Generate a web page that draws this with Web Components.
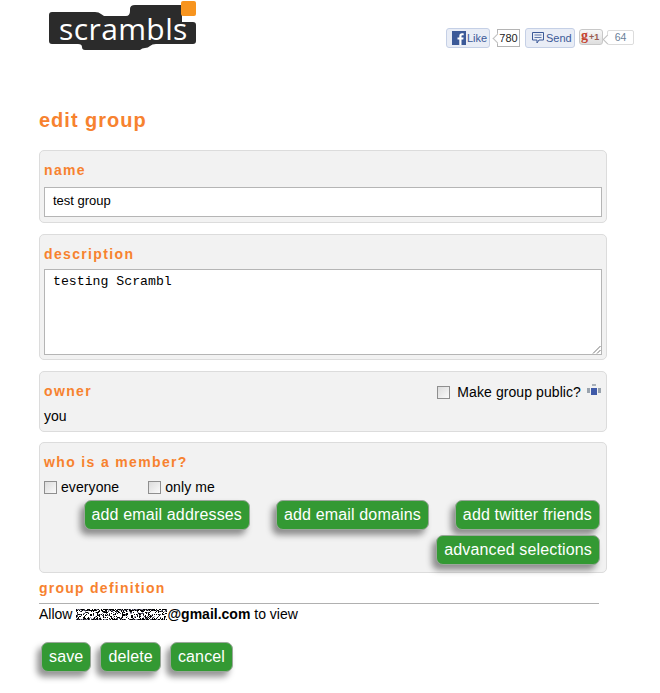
<!DOCTYPE html>
<html lang="en"><head><meta charset="utf-8"><title>edit group</title>
<style>
html,body{margin:0;background:#fff}
body{font:14px "Liberation Sans",Arial,sans-serif;color:#000}
</style></head>
<body>
<scr-page>
  <scr-header slot="header"></scr-header>
  <h1 slot="title" style="margin:0;font:bold 20px/24px 'Liberation Sans',sans-serif;letter-spacing:1px;color:#f7822f">edit group</h1>

  <scr-panel style="height:73px">
    <scr-label>name</scr-label>
    <scr-field style="height:30px;margin-top:8px">test group</scr-field>
  </scr-panel>

  <scr-panel style="height:126px;margin-top:11px">
    <scr-label>description</scr-label>
    <scr-field area style="height:86px;margin-top:6px">testing Scrambl</scr-field>
  </scr-panel>

  <scr-panel style="height:61px;margin-top:11px">
    <scr-owner></scr-owner>
  </scr-panel>

  <scr-panel style="height:131px;margin-top:10px">
    <scr-label>who is a member?</scr-label>
    <scr-choices></scr-choices>
    <scr-btn-row style="width:556px">
      <scr-btn>add email addresses</scr-btn>
      <scr-btn>add email domains</scr-btn>
      <scr-btn>add twitter friends</scr-btn>
      <scr-btn>advanced selections</scr-btn>
    </scr-btn-row>
  </scr-panel>

  <scr-definition></scr-definition>

  <scr-actions>
    <scr-btn>save</scr-btn>
    <scr-btn>delete</scr-btn>
    <scr-btn>cancel</scr-btn>
  </scr-actions>
</scr-page>

<script>
function def(name, html, setup){
  customElements.define(name, class extends HTMLElement{
    constructor(){super();const r=this.attachShadow({mode:'open'});r.innerHTML=html;if(setup)setup(r,this);}
  });
}
def('scr-page',`<style>
:host{display:block;width:568px;padding:0 0 21px 39px;box-sizing:content-box}
.head{margin-left:-39px;width:660px}
.title{margin-top:47px;margin-bottom:18px}
</style><div class="head"><slot name="header"></slot></div><div class="title"><slot name="title"></slot></div><slot></slot>`);

def('scr-header',`<style>
:host{display:flex;height:61px;justify-content:space-between;align-items:flex-start}
.logo{position:relative;width:150px;height:52px;margin-left:48px}
.logo svg{display:block}
.logo span{position:absolute;left:11px;top:11px;font:400 30px/36px "Open Sans",sans-serif;color:#fff;letter-spacing:.4px}
.social{display:flex;align-items:center;margin:28px 26px 0 0;font:11px/14px "Liberation Sans",sans-serif;color:#3b5998}
.fb{display:flex;align-items:center;gap:1px;box-sizing:border-box;height:20px;width:44px;padding:0 0 0 5px;background:#e9edf6;border:1px solid #c5d0e6;border-radius:3px}
.fb svg{display:block}
.count{position:relative;box-sizing:border-box;width:23px;height:18px;line-height:16px;text-align:center;border:1px solid #b4b4b4;background:#fff;color:#222;margin-left:7px;font-size:11px}
.count:before{content:"";position:absolute;left:-4px;top:5px;width:6px;height:6px;background:#fff;border-left:1px solid #c0c0c0;border-bottom:1px solid #c0c0c0;transform:rotate(45deg)}
.gp{display:flex;align-items:center;gap:1px;box-sizing:border-box;height:16px;width:24px;padding:0 0 0 1px;border:1px solid #c8c8c8;border-radius:3px;background:linear-gradient(#f7f7f7,#dedede);color:#9a5a4e;font:bold 9px/14px "Liberation Sans",sans-serif;margin:0 0 2px 4px}
.gp span{font:bold 14px/12px "Liberation Serif",serif;color:#c5432f;margin-top:-3px}
.c2{width:27px;height:15px;line-height:13px;border-color:#dcdcdc;border-radius:2px;color:#6a7f99;font-size:10.5px;margin:0 0 2px 4px}
</style>
<div class="logo">
<svg width="150" height="52" viewBox="0 0 150 52">
<path fill="#2b2b2b" d="M4 12H47Q51 12 53 14L56 16H78Q82 16 82 11V9Q82 5 87 5H134V22H145Q148 22 148 25V41Q148 44 145 44H108Q104 44 102 46 100 48 97 48 94 48 92 50H37Q34 50 34 47 34 44 30 44H4Q1 44 1 41V15Q1 12 4 12Z"/>
<rect x="133" y="1" width="15" height="15" rx="2" fill="#f7941e"/>
</svg><span>scrambls</span></div>
<div class="social">
<div class="fb"><svg width="14" height="14" viewBox="0 0 14 14"><rect width="14" height="14" fill="#3b5998"/><path fill="#fff" d="M9.5 14V8.6h1.8l.3-2.1H9.5V5.3c0-.6.2-1 1-1h1.2V2.4C11.4 2.400 10.800 2.300 10 2.300 8.400 2.300 7.300 3.300 7.300 5v1.500H5.500v2.100h1.800V14z"/></svg>Like</div>
<div class="count">780</div>
<div class="fb" style="margin-left:5px;width:50px"><svg width="14" height="13" viewBox="0 0 14 13" fill="none" stroke="#3b5998"><path d="M1.500.500h11v7.500H8L6 11V8H1.500z"/><path d="M3.500 3h7M3.500 5.500h7" stroke-width=".8"/></svg>Send</div>
<div class="gp"><span>g</span>+1</div>
<div class="count c2">64</div>
</div>`);

def('scr-panel',`<style>
:host{display:block;box-sizing:border-box;background:#f2f2f2;border:1px solid #dcdcdc;border-radius:5px;padding:11px 4px 0 4px}
</style><slot></slot>`);

def('scr-label',`<style>
:host{display:block;font:bold 14px/17px "Liberation Sans",sans-serif;letter-spacing:1.35px;color:#f7822f}
</style><slot></slot>`);

def('scr-field',`<style>
:host{display:block;position:relative;box-sizing:border-box;background:#fff;border:1px solid #b5b5b5;padding:5px 8px;font:13px/16px "Liberation Sans",sans-serif;color:#000}
:host([area]){font:13.2px/15px "Liberation Mono",monospace;padding:4px 8px}
svg{display:none;position:absolute;right:0;bottom:0}
:host([area]) svg{display:block}
</style><slot></slot><svg width="9" height="9" viewBox="0 0 9 9" stroke="#777" fill="none"><path d="M1 8.500 8.500 1M5 8.500 8.500 5"/></svg>`);

def('scr-check',`<style>
:host{display:inline-flex;align-items:center;gap:var(--gap,4px);font:14px/17px "Liberation Sans",sans-serif;letter-spacing:.08px;color:#000}
i{display:block;box-sizing:border-box;width:13px;height:13px;border:1px solid #8f8f8f;background:linear-gradient(135deg,#dcdcdc,#fafafa)}
</style><i></i><slot></slot>`);

def('scr-owner',`<style>
:host{display:block;position:relative}
.top{display:flex;justify-content:space-between;align-items:flex-start}
.pub{display:flex;align-items:flex-start;margin-right:1px}
scr-check{margin-top:1px;--gap:7px;margin-right:6px}
svg{display:block;margin-top:1px}
.you{font:14px/17px "Liberation Sans",sans-serif;margin-top:7px}
</style><div class="top"><scr-label>owner</scr-label><div class="pub"><scr-check>Make group public?</scr-check>
<svg width="14" height="12" viewBox="0 0 14 12"><rect x="4" y="4" width="6" height="7" fill="#3f5aa8"/><rect x="0" y="4" width="3" height="5" fill="#9aa3ad"/><rect x="11" y="4" width="3" height="5" fill="#9aa3ad"/><rect x="5" y="0" width="4" height="2" fill="#aab2ba"/></svg></div></div>
<div class="you">you</div>`);

def('scr-choices',`<style>
:host{display:flex;gap:29px;margin-top:8px;height:17px}
</style><scr-check>everyone</scr-check><scr-check>only me</scr-check>`);

def('scr-btn-row',`<style>
:host{display:flex;flex-wrap:wrap;justify-content:flex-end;column-gap:26px;row-gap:5px;margin-top:4px}
</style><slot></slot>`);

def('scr-btn',`<style>
:host{display:block;box-sizing:border-box;height:30px;padding:0 7px;border:1px solid #9aa79a;border-radius:7px;background:#339933;color:#fff;font:16px/28px "Liberation Sans",sans-serif;letter-spacing:.15px;box-shadow:-4px 5px 6px rgba(0,0,0,.42);white-space:nowrap}
</style><slot></slot>`);

def('scr-definition',`<style>
:host{display:block;width:560px;margin-top:7px}
h2{margin:0;font:bold 14px/17px "Liberation Sans",sans-serif;letter-spacing:1.25px;color:#f7822f;padding-bottom:6px;border-bottom:1px solid #b0b0b0}
p{display:flex;align-items:center;margin:2px 0 0;font:14px/17px "Liberation Sans",sans-serif;white-space:pre}
svg{display:block;margin:0 0 0 4px}
b{font-weight:bold}
</style><h2>group definition</h2><p>Allow<svg id="n" width="91" height="13" viewBox="0 0 91 13"></svg><b>@gmail.com</b> to view</p>`,
(r)=>{
  const s=r.getElementById('n');let v=12345,out='';
  const rnd=()=>(v=(v*1103515245+12345)&0x7fffffff)/0x7fffffff;
  for(let y=1;y<12;y++)for(let x=0;x<91;x++){
    const d=rnd();const edge=(y<3||y>10)?0.5:1;
    if(d*edge<.4){const g=rnd();const c=g<.65?'#000':g<.85?'#445':'#99a';
      out+=`<rect x="${x}" y="${y}" width="1" height="1" fill="${c}"/>`;}
  }
  s.innerHTML=out;
});

def('scr-actions',`<style>
:host{display:flex;gap:9px;margin-top:19px;margin-left:2px}
</style><slot></slot>`);
</script>
</body></html>
